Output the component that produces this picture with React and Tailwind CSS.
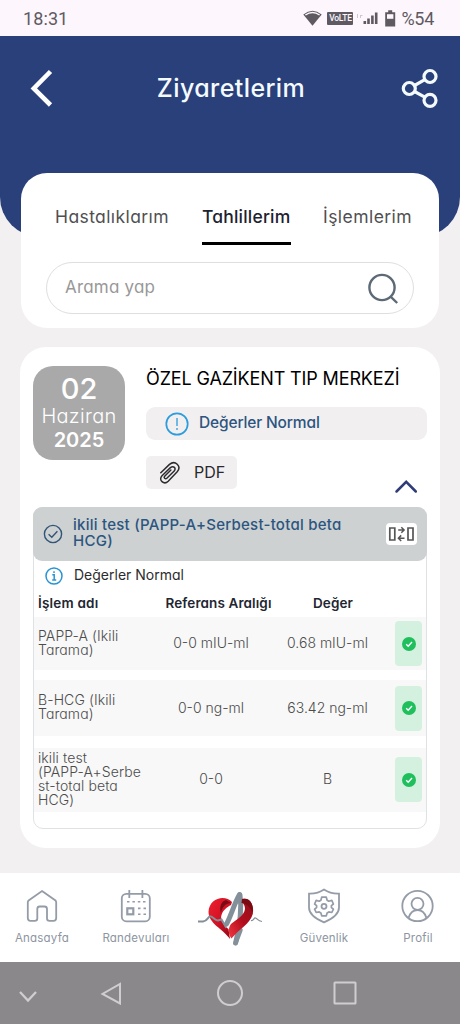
import React from 'react';

const RESULTS = [
  { id: 1, name: ['PAPP-A (Ikili', 'Tarama)'], range: '0-0 mIU-ml', value: '0.68 mIU-ml', row: 'h-[53px] mb-[10px]' },
  { id: 2, name: ['B-HCG (Ikili', 'Tarama)'], range: '0-0 ng-ml', value: '63.42 ng-ml', row: 'h-14 mb-3' },
  { id: 3, name: ['ikili test', '(PAPP-A+Serbe', 'st-total beta', 'HCG)'], range: '0-0', value: 'B', row: 'h-16 pb-[1px]' },
];

function StatusBar() {
  return (
    <div className="h-9 bg-[#fdf6fd] flex items-center justify-between pl-[23px] pr-[26px] font-[Roboto,sans-serif] text-[#5f5a62]">
      <span className="text-[18px] leading-none tracking-[0.1px] pt-0.5">18:31</span>
      <div className="flex items-center">
        <svg width="19" height="16" viewBox="0 0 19 16">
          <path d="M0.3 4.4 Q9.5 -3 18.7 4.4 L9.5 15.8 Z" fill="#5f5a62" />
          <path d="M2.4 5 Q9.5 -0.2 16.6 5" fill="none" stroke="#fdf6fd" strokeWidth="1.5" />
        </svg>
        <span className="ml-[5px] w-[26px] h-[13px] rounded-[1px] bg-[#5f5a62] text-[#fdf6fd] text-[8.5px] tracking-[-0.2px] font-medium flex items-center justify-center leading-none">VoLTE</span>
        <svg className="ml-[3px]" width="22" height="14" viewBox="0 0 22 14">
          <path d="M1.5 3v4M4.5 4v3M4.5 4.5h2" stroke="#cfc8d0" strokeWidth="1" fill="none" />
          <path d="M8.8 10v3M12.5 7.5V13M16.4 4.5V13M20.2 1.5V13" stroke="#5f5a62" strokeWidth="2.6" fill="none" />
        </svg>
        <svg className="ml-[7px]" width="11" height="17" viewBox="0 0 11 17">
          <path d="M3.2 0.3h4v2h3v14.2H0.2V2.3h3z" fill="#5f5a62" />
          <path d="M2 4.2h6.4v4.6H2z" fill="#fdf6fd" />
        </svg>
        <span className="ml-[5px] text-[18px] leading-none tracking-[-0.3px] pt-0.5">%54</span>
      </div>
    </div>
  );
}

function Header() {
  return (
    <header className="h-[201px] bg-[#2a407a] rounded-b-[40px] pl-[30px] pr-[22px] pt-8">
      <div className="h-10 flex items-center justify-between">
        <svg width="24" height="38" viewBox="0 0 24 38">
          <path d="M20.5 2.5 L3.8 19.5 L20.5 36" fill="none" stroke="#fff" strokeWidth="4.6" />
        </svg>
        <h1 className="ml-[7px] text-[25px] leading-none font-medium tracking-[0.4px] text-[#f4fbff] whitespace-nowrap">Ziyaretlerim</h1>
        <svg width="37" height="40" viewBox="0 0 37 40" fill="none" stroke="#f4fbff" strokeWidth="3.2">
          <circle cx="8.3" cy="20.5" r="6" />
          <circle cx="29" cy="8.5" r="6" />
          <circle cx="29" cy="32.3" r="6" />
          <path d="M13.5 17.5 L23.8 11.7 M13.5 23.5 L23.8 29.2" />
        </svg>
      </div>
    </header>
  );
}

function SearchCard() {
  return (
    <section className="relative -mt-16 mx-[21px] h-[155px] rounded-[26px] bg-white px-[25px] pt-[26px]">
      <div className="flex pl-[9px] text-[17.5px] leading-none text-[#4f4f51] whitespace-nowrap">
        <div className="w-[147px] h-[46px] pt-[9px]">
          <span className="tracking-[0.4px]">Hastalıklarım</span>
        </div>
        <div className="w-[89px] h-[46px] pt-[9px] border-b-[3px] border-black text-[#1d2230] font-medium">
          <span className="tracking-[0.2px]">Tahlillerim</span>
        </div>
        <div className="pl-8 pt-[9px]">
          <span className="tracking-[0.45px]">İşlemlerim</span>
        </div>
      </div>
      <div className="mt-[17px] h-[52px] rounded-full border border-[#dedfe0] flex items-center justify-between pl-[18px] pr-[14px]">
        <span className="text-[17px] leading-none tracking-[0.2px] text-[#989898] pb-[2px]">Arama yap</span>
        <svg width="34" height="34" viewBox="0 0 34 34" fill="none" stroke="#5d6a76" strokeWidth="2.4">
          <circle cx="17" cy="16.5" r="12.6" />
          <path d="M25.6 25.6 L32.2 32" />
        </svg>
      </div>
    </section>
  );
}

function ResultRow({ result }) {
  return (
    <div className={`flex items-center bg-[#f8f8f8] pl-1 pr-1 text-[14px] font-light text-[#4c4c4c] leading-[14px] ${result.row}`}>
      <div className="w-[108px] pb-[2px] whitespace-nowrap tracking-[0.1px]">
        {result.name.map(line => <div key={line}>{line}</div>)}
      </div>
      <div className="w-[130px] pb-[1px] text-center">{result.range}</div>
      <div className="w-[103px] pb-[1px] text-center whitespace-nowrap">{result.value}</div>
      <div className="ml-auto w-[27px] h-[45px] rounded-[4px] bg-[#d4f1df] flex items-center justify-center">
        <svg width="14" height="14" viewBox="0 0 14 14">
          <circle cx="7" cy="7" r="7" fill="#20bf5d" />
          <path d="M4.2 7.2 L6.2 9.2 L10 5" fill="none" stroke="#fff" strokeWidth="1.4" />
        </svg>
      </div>
    </div>
  );
}

function TestPanel() {
  return (
    <div className="mt-[18px] h-[322px] rounded-[10px] border border-[#dfe2e4]">
      <div className="-mx-px -mt-px h-[54px] rounded-[9px] bg-[#cdd1d2] flex items-center pl-[10px] pr-[10px]">
        <svg width="20" height="20" viewBox="0 0 20 20" fill="none" stroke="#325478" strokeWidth="1.4">
          <circle cx="10" cy="10" r="8.6" />
          <path d="M5.6 10.2 L8.8 13.2 L14.4 7.2" />
        </svg>
        <div className="ml-[10px] pb-[2px] text-[15px] leading-4 font-medium tracking-[0.25px] text-[#2c5580] whitespace-nowrap">
          <div>ikili test (PAPP-A+Serbest-total beta</div>
          <div>HCG)</div>
        </div>
        <div className="ml-auto w-[31px] h-[22px] rounded-[4px] bg-white flex items-center justify-center">
          <svg width="27" height="18" viewBox="0 0 27 18" fill="none" stroke="#555" strokeWidth="1.7">
            <path d="M1.8 3h5v12h-5zM20 3h5v12h-5z" />
            <path d="M10.2 5h5.8M13.3 2.2l2.8 2.8l-2.8 2.8M16.5 13.2h-6M13.2 10.4l-2.8 2.8l2.8 2.8" strokeWidth="1.5" />
          </svg>
        </div>
      </div>
      <div className="h-[29px] flex items-center pl-[10px]">
        <svg width="20" height="20" viewBox="0 0 20 20" fill="none" stroke="#2994d2" strokeWidth="1.5">
          <circle cx="10" cy="10" r="8" />
          <path d="M8.3 8.7h1.9v5M8.2 14h4M10 5.2v1.8" />
        </svg>
        <span className="ml-[10px] pb-[1px] text-[14px] leading-none text-[#2c2c2e]">Değerler Normal</span>
      </div>
      <div className="h-[27px] pl-1 flex items-center text-[13.5px] font-semibold leading-none text-[#222631] whitespace-nowrap">
        <span className="w-[120px] tracking-[0.2px]">İşlem adı</span>
        <span className="w-[121px] text-center tracking-[0.1px]">Referans Aralığı</span>
        <span className="w-[108px] text-center tracking-[0.1px]">Değer</span>
      </div>
      <div>
        {RESULTS.map(result => <ResultRow key={result.id} result={result} />)}
      </div>
    </div>
  );
}

function VisitCard() {
  return (
    <section className="mt-[19px] mx-5 h-[501px] rounded-[26px] bg-white px-[13px] pt-[19px]">
      <div className="h-[123px] flex">
        <div className="w-[92px] h-[94px] rounded-[20px] bg-[#a9a9a9] text-white text-center leading-none pt-[8px]">
          <div className="h-7 text-[29px] font-medium">02</div>
          <div className="h-[26px] pt-[4px] text-[20px] font-light tracking-[0.3px]">Haziran</div>
          <div className="h-[26px] pt-[2px] text-[20px] font-semibold">2025</div>
        </div>
        <div className="ml-[21px] flex-1">
          <h2 className="h-[41px] pt-[4px] text-[18px] leading-none text-black whitespace-nowrap tracking-[-0.13px]">ÖZEL GAZİKENT TIP MERKEZİ</h2>
          <div className="h-[33px] rounded-[9px] bg-[#f2eff1] flex items-center pl-[19px]">
            <svg width="24" height="24" viewBox="0 0 24 24" fill="none" stroke="#2b9cdc" strokeWidth="1.7">
              <circle cx="12" cy="12" r="10.7" />
              <path d="M12 6v8M12 16v2" strokeWidth="1.3" />
            </svg>
            <span className="ml-[10px] pb-[1px] text-[15.5px] leading-none tracking-[-0.15px] text-[#2c5580] font-medium">Değerler Normal</span>
          </div>
          <div className="flex justify-between">
            <div className="mt-4 w-[91px] h-[33px] rounded-[5px] bg-[#f2eff1] flex items-center pl-[13px]">
              <svg width="22" height="24" viewBox="0 0 22 24" fill="none" stroke="#2c2c2e" strokeWidth="1.5" strokeLinecap="round">
                <path d="M1.8 11.8 L10.5 3.4 C16 -1.2 23 5.2 18.2 10.8 L9.2 20.2 C5 24.3 -1 19 3 14.8 L11.4 6.6 C14.6 4.2 17.6 7.4 15.2 9.9 L8.1 17 C6.3 18.6 4.2 16.8 5.9 14.9 L11.9 9" />
              </svg>
              <span className="ml-[13px] pb-[2px] text-[16px] leading-none text-[#29292b]">PDF</span>
            </div>
            <svg className="mt-[39px] mr-[9px]" width="24" height="16" viewBox="0 0 24 16">
              <path d="M2.5 12.5 L12.2 2.8 L21.8 12.5" fill="none" stroke="#303c78" strokeWidth="2.5" strokeLinecap="round" />
            </svg>
          </div>
        </div>
      </div>
      <TestPanel />
    </section>
  );
}

const HomeIcon = () => (
  <svg width="34" height="36" viewBox="0 0 34 36" fill="none" stroke="#949ca8" strokeWidth="1.8">
    <path d="M17 3 L30.5 12.5 Q31.2 13.2 31.2 14.5 V30 Q31.2 32.8 28.5 32.8 H24.5 Q22 32.8 22 30.5 V21 Q22 18.5 19.5 18.5 H14.7 Q12.3 18.5 12.3 21 V30.5 Q12.3 32.8 9.8 32.8 H5.5 Q2.8 32.8 2.8 30 V14.5 Q2.8 13.2 3.6 12.5 Z" />
  </svg>
);

const CalendarIcon = () => (
  <svg width="34" height="36" viewBox="0 0 34 36" fill="none" stroke="#949ca8" strokeWidth="1.8">
    <rect x="2.8" y="5.8" width="28" height="27.5" rx="4.5" />
    <path d="M10.3 2v8M23.4 2v8" />
    <path d="M8 13.8h2.5M13.4 13.8h2.5M18.8 13.8h2.5M24 13.8h2.5M19 20.4h2.5M24.5 20.4h2.5M19 26.3h2.5M24.5 26.3h2.5" strokeWidth="1.6" />
    <rect x="8.3" y="20.3" width="6" height="6" strokeWidth="2.2" />
  </svg>
);

const ShieldIcon = () => (
  <svg width="34" height="36" viewBox="0 0 34 36" fill="none" stroke="#949ca8" strokeWidth="1.8">
    <path d="M17 1.5 C13 4.3 7.5 5.8 2 5.6 V19.5 C2 26.5 9 31 17 34.3 C25 31 32 26.5 32 19.5 V5.6 C26.5 5.8 21 4.3 17 1.5Z" />
    <path d="M14.7 9.2h4.6l.8 3 1.7 1 3-.8 1.6 3.6-2 1.6v1.9l2 1.6-1.6 3.4-3-.6-1.7 1-.8 2.9h-4.6l-.8-2.9-1.7-1-3 .6-1.6-3.4 2-1.6v-1.9l-2-1.6 1.6-3.6 3 .8 1.7-1z" strokeLinejoin="round" strokeWidth="1.7" />
    <circle cx="17" cy="18.3" r="2.5" />
  </svg>
);

const ProfileIcon = () => (
  <svg width="34" height="36" viewBox="0 0 34 36" fill="none" stroke="#949ca8" strokeWidth="1.8">
    <circle cx="16.5" cy="18" r="15.2" />
    <circle cx="16.5" cy="15.8" r="6" />
    <path d="M7.5 30 Q10 22 16.5 22 Q23 22 25.5 30" />
  </svg>
);

// heart logo with the pulse line drawn across it
const HeartLogo = () => (
  <svg className="mt-[14px]" width="66" height="60" viewBox="0 0 66 60" fill="none">
    <defs>
      <linearGradient id="heart" x1="0" y1="0" x2="1" y2="1">
        <stop offset="0" stopColor="#f21f2e" />
        <stop offset="0.5" stopColor="#d01325" />
        <stop offset="1" stopColor="#8e0715" />
      </linearGradient>
      <linearGradient id="ribbon" x1="1" y1="0" x2="0" y2="1">
        <stop offset="0" stopColor="#8f101b" />
        <stop offset="0.5" stopColor="#b20c1c" />
        <stop offset="1" stopColor="#f33542" />
      </linearGradient>
    </defs>
    <path d="M35 15 C28 7 12 11 11.5 25 C12 37 25 41 33 52 L31.5 42 C26 38 23 32 24.5 28 C26 23 30 20 34 18Z" fill="url(#heart)" />
    <path d="M34 16 C29 16 25 20 24 26 C22 21 24 14 29 13Z" fill="#7a0a14" />
    <path d="M43 8 C45 22 42.5 40 38.6 56" stroke="#83909a" strokeWidth="5" strokeLinecap="round" />
    <path d="M38.6 56 L43.5 43" stroke="#83909a" strokeWidth="4.5" strokeLinecap="round" />
    <path d="M46 12 C53 10 57.5 18 55.8 27 C53 37 42 42 34.5 51.5 C31 47 31 41 34 37 C40 32 47 29 48 22 C48 19 47 17 45 15Z" fill="url(#ribbon)" />
    <path d="M45 12 C52 10 57 17 55.5 25 C53 20 49 16 44.5 16Z" fill="#7a0a14" />
    <path d="M1 34.5 H6 C11 34 11 29 13.5 29.3 C16 29.5 18 34 21 33.5 L24.5 32.5 L28.5 39.5 L31.5 34" stroke="#83909a" strokeWidth="2" />
    <path d="M29.5 37 C34 29 37 17 42.5 7.5" stroke="#83909a" strokeWidth="5" strokeLinecap="round" />
    <path d="M54 33.5 C57 34 56.5 30.5 58.5 31 C61 32 60.5 34 65 34.5" stroke="#83909a" strokeWidth="1.2" />
  </svg>
);

function NavItem({ label, children }) {
  return (
    <div className="w-[94px] shrink-0 pt-[15px] flex flex-col items-center text-[11.5px] leading-none text-[#8d95a1]">
      {children}
      <span className="mt-[9px] tracking-[0.2px]">{label}</span>
    </div>
  );
}

function BottomNav() {
  return (
    <nav className="mt-[25px] h-[89px] bg-white flex justify-center">
      <NavItem label="Anasayfa"><HomeIcon /></NavItem>
      <NavItem label="Randevuları"><CalendarIcon /></NavItem>
      <div className="w-[94px] shrink-0 flex justify-center"><HeartLogo /></div>
      <NavItem label="Güvenlik"><ShieldIcon /></NavItem>
      <NavItem label="Profil"><ProfileIcon /></NavItem>
    </nav>
  );
}

function SystemNav() {
  return (
    <div className="h-[62px] bg-[#8a888b] flex items-center pl-[18px]">
      <svg width="20" height="14" viewBox="0 0 20 14" className="mt-2" fill="none" stroke="#d0cdd1" strokeWidth="2.3">
        <path d="M2 2 L10 10.5 L18 2" />
      </svg>
      <svg width="24" height="24" viewBox="0 0 24 24" className="ml-[61px] mb-[1px]" fill="none" stroke="#d0cdd1" strokeWidth="2">
        <path d="M21 3 V22.5 L3.5 13 Z" />
      </svg>
      <svg width="28" height="28" viewBox="0 0 28 28" className="ml-[93px]" fill="none" stroke="#d0cdd1" strokeWidth="2">
        <circle cx="14" cy="14" r="12" />
      </svg>
      <svg width="26" height="26" viewBox="0 0 26 26" className="ml-[88px]" fill="none" stroke="#d0cdd1" strokeWidth="2">
        <rect x="2.5" y="2.5" width="21" height="21" rx="0.5" />
      </svg>
    </div>
  );
}

export default function App() {
  return (
    <div className="w-[460px] h-[1024px] overflow-hidden bg-[#f3f0f1] font-[Inter,sans-serif] [font-feature-settings:'cv11']">
      <StatusBar />
      <Header />
      <SearchCard />
      <VisitCard />
      <BottomNav />
      <SystemNav />
    </div>
  );
}
